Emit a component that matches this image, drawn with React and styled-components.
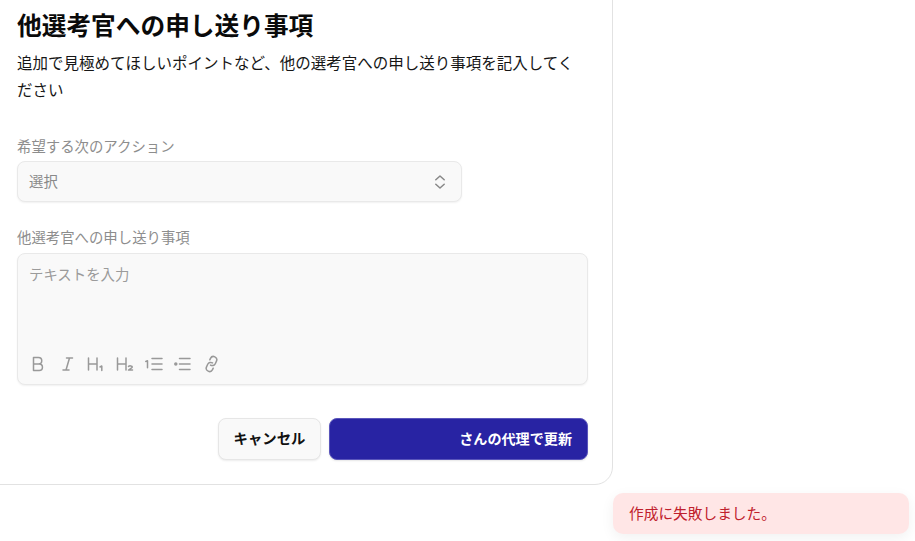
import React from "react";
import styled, { createGlobalStyle } from "styled-components";

const Global = createGlobalStyle`
  html, body { margin: 0; padding: 0; background: #fff; overflow: hidden; }
  body { width: 915px; height: 541px; font-family: "Noto Sans CJK JP", "Noto Sans", sans-serif; }
`;
const Page = styled.div`
  position: relative;
  width: 915px;
  height: 541px;
  overflow: hidden;
`;
const Card = styled.section`
  box-sizing: border-box;
  width: 633px;
  height: 505px;
  margin: -20px 0 0 -20px;
  padding: 25px 24px 0 36px;
  background: #fff;
  border: 1px solid #e2e2e2;
  border-radius: 18px;
  display: flex;
  flex-direction: column;
`;
const Title = styled.h2`
  margin: 0;
  font-size: 24.7px;
  line-height: 36px;
  font-weight: 700;
  color: #0a0a0a;
`;
const Lead = styled.p`
  margin: 7px 0 0;
  font-size: 15.5px;
  line-height: 27px;
  color: #161616;
  width: 565px;
`;
const Field = styled.div`
  display: flex;
  flex-direction: column;
  gap: ${(p) => p.$gap}px;
  margin-top: ${(p) => p.$top}px;
`;
const Label = styled.label`
  font-size: 14.4px;
  line-height: 21px;
  color: #8d8d8d;
`;
const Select = styled.div`
  box-sizing: border-box;
  width: 445px;
  height: 41px;
  padding: 0 12px 2px 11px;
  display: flex;
  align-items: center;
  justify-content: space-between;
  background: #f9f9f9;
  border: 1px solid #e9e9e9;
  border-radius: 8px;
  box-shadow: 0 1px 2px rgba(0,0,0,.06);
  font-size: 14.4px;
  color: #8a8a8a;
`;
const Chevrons = styled.svg`
  width: 18px;
  height: 18px;
  margin-bottom: -2px;
  fill: none;
  stroke: #888;
  stroke-width: 1.5;
  stroke-linecap: round;
  stroke-linejoin: round;
`;
const Editor = styled.div`
  box-sizing: border-box;
  width: 571px;
  height: 132px;
  padding: 9px 12px 11px 11px;
  display: flex;
  flex-direction: column;
  justify-content: space-between;
  background: #f9f9f9;
  border: 1px solid #e9e9e9;
  border-radius: 8px;
  box-shadow: 0 1px 2px rgba(0,0,0,.06);
`;
const Placeholder = styled.div`
  font-size: 14.4px;
  line-height: 21px;
  color: #9b9b9b;
`;
const Tools = styled.div`
  display: flex;
  align-items: center;
  height: 18px;
`;
const Tool = styled.svg`
  width: 18px;
  height: 18px;
  margin-right: 11px;
  fill: none;
  stroke: #999;
  stroke-width: 1.5;
  stroke-linecap: round;
  stroke-linejoin: round;
`;
const Actions = styled.div`
  display: flex;
  justify-content: flex-end;
  gap: 8px;
  width: 571px;
  margin-top: 33px;
`;
const Cancel = styled.button`
  box-sizing: border-box;
  width: 103px;
  height: 42px;
  padding: 0 0 3px;
  background: #f9f9f9;
  border: 1px solid #e6e6e6;
  border-radius: 8px;
  box-shadow: 0 1px 2px rgba(0,0,0,.08);
  font: 700 14.4px "Noto Sans CJK JP", sans-serif;
  color: #111;
`;
const Primary = styled.button`
  box-sizing: border-box;
  width: 259px;
  height: 42px;
  padding: 0 15px 3px;
  text-align: right;
  background: #2823a3;
  border: 1px solid #5a55bb;
  border-radius: 8px;
  box-shadow: 0 1px 2px rgba(0,0,0,.1);
  font: 700 14.1px "Noto Sans CJK JP", sans-serif;
  color: #fff;
`;
const Toast = styled.div`
  position: absolute;
  left: 613px;
  top: 493px;
  box-sizing: border-box;
  width: 296px;
  height: 41px;
  padding: 0 16px 3px;
  display: flex;
  align-items: center;
  background: #ffe6e6;
  border-radius: 10px;
  box-shadow: 0 4px 14px rgba(0,0,0,.06);
  font-size: 14.7px;
  color: #c0202c;
`;

export default function App() {
  return (
    <Page>
      <Global />
      <Card>
        <Title>他選考官への申し送り事項</Title>
        <Lead>追加で見極めてほしいポイントなど、他の選考官への申し送り事項を記入してください</Lead>
        <Field $top={32} $gap={5}>
          <Label>希望する次のアクション</Label>
          <Select>
            <span>選択</span>
            <Chevrons viewBox="0 0 18 18">
              <path d="M4.800 6.800 9 3l4.200 3.800" />
              <path d="M4.800 11.200 9 15l4.200-3.800" />
            </Chevrons>
          </Select>
        </Field>
        <Field $top={24} $gap={6}>
          <Label>他選考官への申し送り事項</Label>
          <Editor>
            <Placeholder>テキストを入力</Placeholder>
            <Tools>
              <Tool viewBox="0 0 18 18"><path d="M4.500 2.500h5a3 3 0 0 1 0 6.500h-5zM4.500 9h5.700a3 3 0 0 1 0 6.500H4.500z" /></Tool>
              <Tool viewBox="0 0 18 18"><path d="M8.500 3h6M5 15h6M11.500 3 8 15" /></Tool>
              <Tool viewBox="0 0 18 18"><path d="M1.500 3v12M10 3v12M1.500 9H10M13 12l1.800-1v4.500" /></Tool>
              <Tool viewBox="0 0 18 18"><path d="M1.500 3v12M10 3v12M1.500 9H10M12.500 11.500c.8-1 3.800-.8 3.800.6 0 1.200-2.900 1.600-3.800 3h4" /></Tool>
              <Tool viewBox="0 0 18 18"><path d="M7 3.500h10M7 9h10M7 14.500h10M.8 6.500l1.700-.8v7" /></Tool>
              <Tool viewBox="0 0 18 18"><path d="M5.500 3.500H16M5.500 9H16M5.500 14.500H16" /><circle cx="1.800" cy="9" r="1" fill="#999" /></Tool>
              <Tool viewBox="0 0 18 18">
                <g transform="translate(8.500 9) rotate(-20) scale(.66) translate(-12 -12)">
                  <path vectorEffect="non-scaling-stroke" d="M10 13a5 5 0 0 0 7.540.54l3-3a5 5 0 0 0-7.070-7.070l-1.720 1.710" />
                  <path vectorEffect="non-scaling-stroke" d="M14 11a5 5 0 0 0-7.540-.54l-3 3a5 5 0 0 0 7.070 7.070l1.710-1.710" />
                </g>
              </Tool>
            </Tools>
          </Editor>
        </Field>
        <Actions>
          <Cancel>キャンセル</Cancel>
          <Primary>さんの代理で更新</Primary>
        </Actions>
      </Card>
      <Toast>作成に失敗しました。</Toast>
    </Page>
  );
}
